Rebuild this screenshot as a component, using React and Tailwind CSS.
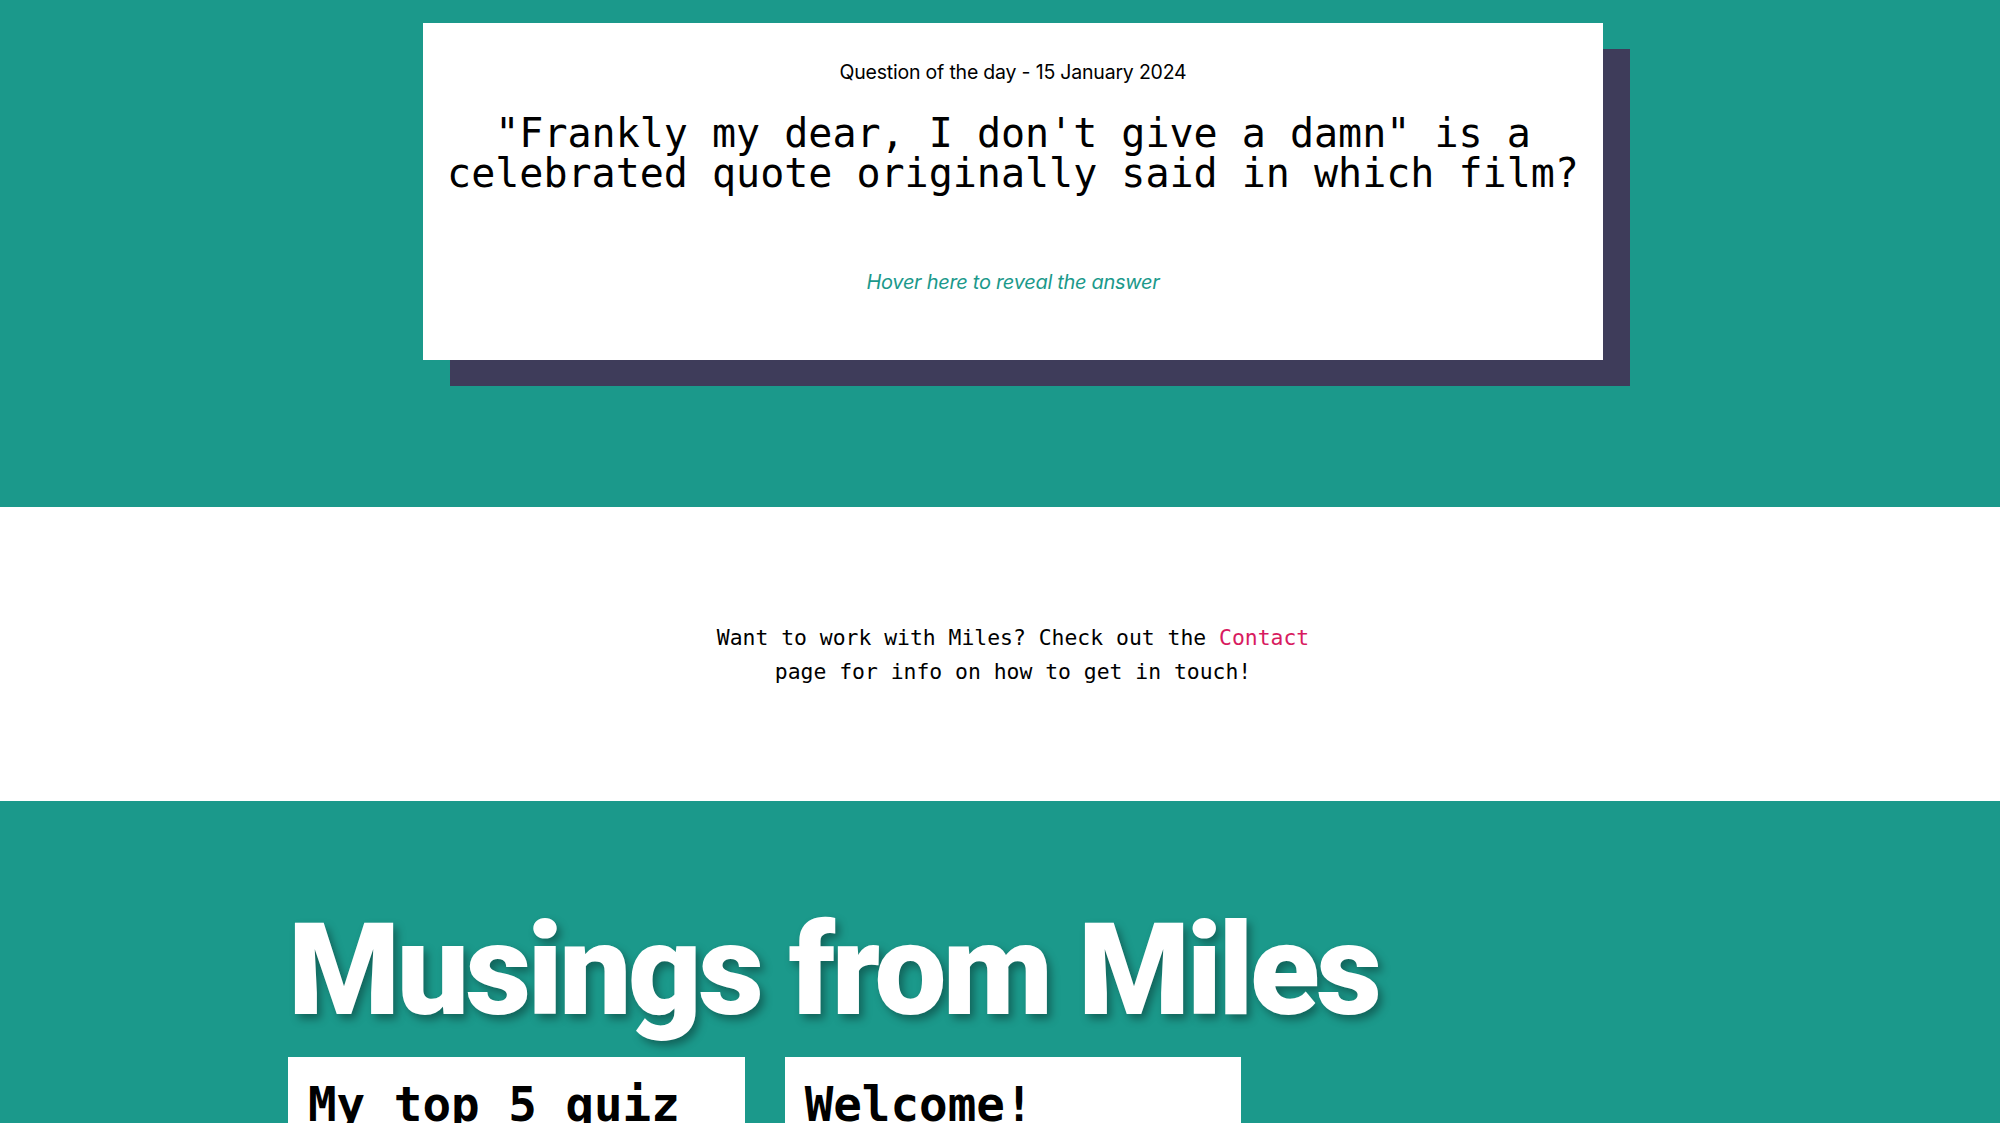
import React from "react";

const mono = "font-['DejaVu_Sans_Mono','Liberation_Mono',monospace]";
const sans = "font-['Inter','Noto_Sans',sans-serif]";

function QuestionCard() {
  return (
    <div className="w-[1180px] h-[337px] bg-white shadow-[27px_26px_0_#3e3c5a] pt-[35px] text-center">
      <p className={`${sans} text-[19.5px] leading-[28px] text-black tracking-[-0.2px]`}>
        Question of the day - 15 January 2024
      </p>
      <h2 className={`${mono} mt-[27px] px-[22px] text-[40px] leading-[40px] text-black font-normal`}>
        "Frankly my dear, I don't give a damn" is a celebrated quote originally said in which film?
      </h2>
      <p className={`${sans} mt-[75px] text-[20px] leading-[28px] italic text-[#1b998b] tracking-[-0.3px] cursor-pointer`}>
        Hover here to reveal the answer
      </p>
    </div>
  );
}

function PostCard({ title }) {
  return (
    <div className="bg-white min-h-[300px] px-[20px] pt-[19px]">
      <h3 className={`${mono} font-semibold text-[47.5px] leading-[57px] text-black`}>{title}</h3>
    </div>
  );
}

export default function App() {
  return (
    <div className="min-h-screen bg-[#1b998b]">
      {/* question of the day */}
      <section className="bg-[#1b998b] h-[507px] pt-[23px] pl-[26px] flex justify-center">
        <QuestionCard />
      </section>

      {/* contact strip */}
      <section className="bg-white h-[294px] pt-[114px] pl-[26px] flex justify-center">
        <p className={`${mono} w-[620px] text-center text-[21.4px] leading-[34px] text-black`}>
          Want to work with Miles? Check out the{" "}
          <a href="#" className="text-[#d81b60]">Contact</a> page for info on how to get in touch!
        </p>
      </section>

      {/* blog */}
      <section className="bg-[#1b998b] pt-[105px] pb-10 pl-[26px] flex justify-center">
        <div className="w-[1450px]">
          <h1 className="font-['Roboto',sans-serif] font-black text-white text-[128px] leading-[128px] tracking-[-3.5px] [text-shadow:4px_5px_8px_rgba(0,0,0,0.35)]">
            Musings from Miles
          </h1>
          <div className="mt-[23px] grid grid-cols-3 gap-[40px]">
            <PostCard title="My top 5 quiz questions" />
            <PostCard title="Welcome!" />
          </div>
        </div>
      </section>
    </div>
  );
}
